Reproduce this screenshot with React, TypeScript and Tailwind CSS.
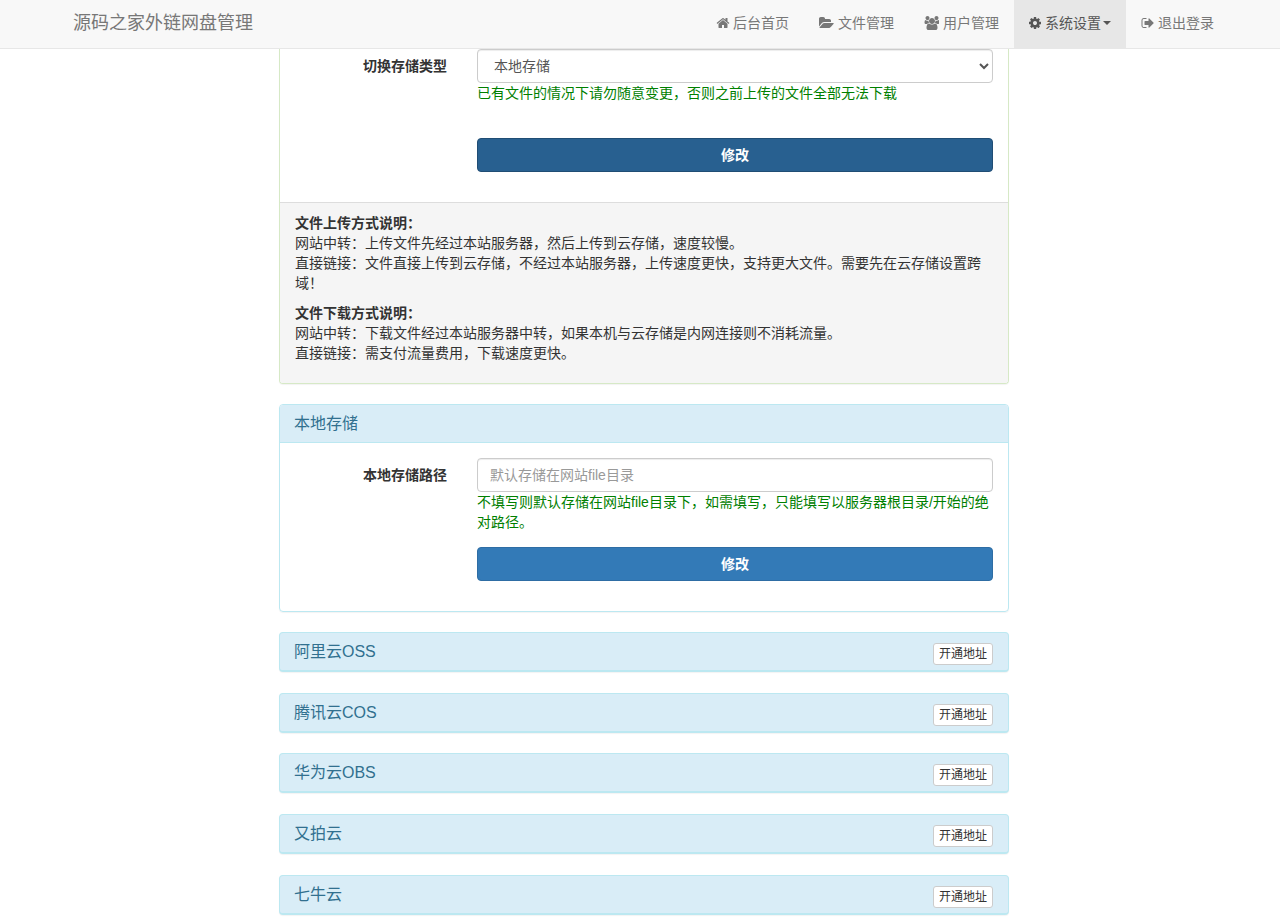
const HOME_PATH =
  "M1472 992v480q0 26-19 45t-45 19h-384v-384h-256v384h-384q-26 0-45-19t-19-45v-480q0-1 .5-3t.5-3l575-474 575 474q1 2 1 6zm223-69l-62 74q-8 9-21 11h-3q-13 0-21-7l-692-577-692 577q-12 8-24 7-13-2-21-11l-62-74q-8-10-7-23.500t11-21.500l719-599q32-26 76-26t76 26l244 204v-195q0-14 9-23t23-9h192q14 0 23 9t9 23v408l219 182q10 8 11 21.500t-7 23.500z";
const FOLDER_PATH =
  "M1879 952q0 31-31 66l-336 396q-43 51-120.500 86.500t-143.500 35.500h-1088q-34 0-60.500-13t-26.500-43q0-31 31-66l336-396q43-51 120.500-86.500t143.500-35.500h1088q34 0 60.500 13t26.500 43zm-343-344v160h-832q-94 0-197 47.500t-164 119.500l-337 396-5 6q0-4-.5-12.500t-.5-12.500v-960q0-92 66-158t158-66h320q92 0 158 66t66 158v32h544q92 0 158 66t66 158z";
const USERS_PATH =
  "M657 896q-162 5-265 128h-134q-82 0-138-40.500t-56-118.500q0-353 124-353 6 0 43.500 21t97.500 42.500 119 21.500q67 0 133-23-5 37-5 66 0 139 81 256zm1071 637q0 120-73 189.500t-194 69.500h-874q-121 0-194-69.500t-73-189.500q0-53 3.500-103.500t14-109 26.500-108.500 43-97.500 62-81 85.500-53.500 111.500-20q10 0 43 21.500t73 48 107 48 135 21.500 135-21.500 107-48 73-48 43-21.500q61 0 111.500 20t85.500 53.500 62 81 43 97.500 26.500 108.500 14 109 3.500 103.500zm-1024-1277q0 106-75 181t-181 75-181-75-75-181 75-181 181-75 181 75 75 181zm704 384q0 159-112.500 271.500t-271.500 112.500-271.500-112.500-112.500-271.500 112.500-271.500 271.500-112.500 271.500 112.500 112.500 271.500zm576 225q0 78-56 118.500t-138 40.500h-134q-103-123-265-128 81-117 81-256 0-29-5-66 66 23 133 23 59 0 119-21.500t97.500-42.500 43.500-21q124 0 124 353zm-128-609q0 106-75 181t-181 75-181-75-75-181 75-181 181-75 181 75 75 181z";
const COG_PATH =
  "M1152 896q0-106-75-181t-181-75-181 75-75 181 75 181 181 75 181-75 75-181zm512-109v222q0 12-8 23t-20 13l-185 28q-19 54-39 91 35 50 107 138 10 12 10 25t-9 23q-27 37-99 108t-94 71q-12 0-26-9l-138-108q-44 23-91 38-16 136-29 186-7 28-36 28h-222q-14 0-24.500-8.500t-11.500-21.500l-28-184q-49-16-90-37l-141 107q-10 9-25 9-14 0-25-11-126-114-165-168-7-10-7-23 0-12 8-23 15-21 51-66.500t54-70.500q-27-50-41-99l-183-27q-13-2-21-12.500t-8-23.500v-222q0-12 8-23t19-13l186-28q14-46 39-92-40-57-107-138-10-12-10-24 0-10 9-23 26-36 98.500-107.500t94.500-71.500q13 0 26 10l138 107q44-23 91-38 16-136 29-186 7-28 36-28h222q14 0 24.500 8.500t11.500 21.500l28 184q49 16 90 37l142-107q9-9 24-9 13 0 25 10 129 119 165 170 7 8 7 22 0 12-8 23-15 21-51 66.500t-54 70.500q26 50 41 98l183 28q13 2 21 12.500t8 23.500z";
const SIGN_OUT_PATH =
  "M704 1440q0 4 1 20t.5 26.500-3 23.500-10 19.500-20.500 6.500h-320q-119 0-203.500-84.500t-84.500-203.500v-704q0-119 84.500-203.500t203.500-84.500h320q13 0 22.500 9.500t9.500 22.500q0 4 1 20t.5 26.500-3 23.500-10 19.500-20.500 6.500h-320q-66 0-113 47t-47 113v704q0 66 47 113t113 47h312l11.500 1 11.500 3 8 5.500 7 9 2 13.500zm928-544q0 26-19 45l-544 544q-19 19-45 19t-45-19-19-45v-288h-448q-26 0-45-19t-19-45v-384q0-26 19-45t45-19h448v-288q0-26 19-45t45-19 45 19l544 544q19 19 19 45z";

function NavItem({
  path,
  wide,
  iconClass,
  label,
  active,
}: {
  path: string;
  wide?: boolean;
  iconClass: string;
  label: string;
  active?: boolean;
}) {
  return (
    <a className={`flex h-[48px] items-center gap-[4px] px-[15px] pb-[2px] ${active ? "bg-[#e7e7e7] text-[#555]" : "text-[#777]"}`}>
      <svg viewBox={wide ? "0 0 1920 1792" : "0 0 1792 1792"} className={`h-[14px] shrink-0 fill-current ${iconClass}`}>
        <path d={path} />
      </svg>
      <span>{label}</span>
      {active && <span className="-ml-[2px] h-0 w-0 border-x-[4px] border-t-[4px] border-x-transparent border-t-current" />}
    </a>
  );
}

function ProviderPanel({ title }: { title: string }) {
  return (
    <div className="mb-[20.75px] flex h-[40px] items-start justify-between rounded-[4px] border border-b-2 border-[#bce8f1] bg-[#d9edf7] pr-[15px] pl-[14px] pt-[10px] shadow-[0_1px_1px_rgba(0,0,0,0.05)]">
      <h3 className="text-[16px] leading-[17.6px] text-[#31708f]">{title}</h3>
      <a className="rounded-[3px] border border-[#ccc] bg-white px-[5px] text-[12px] leading-[20px] text-[#333]">开通地址</a>
    </div>
  );
}

function Row({ label, children }: { label: string; children: React.ReactNode }) {
  return (
    <div className="flex">
      <label className="w-[167px] shrink-0 pt-[7px] text-right font-bold leading-[20px]">{label}</label>
      <div className="ml-[30px] w-[516px] shrink-0">{children}</div>
    </div>
  );
}

export default function App() {
  return (
    <div className="h-[924px] overflow-hidden bg-white text-[14px] leading-[20px] text-[#333] [font-family:'Liberation_Sans','Noto_Sans_CJK_SC',sans-serif]">
      <nav className="flex h-[49px] items-start border-b border-[#e7e7e7] bg-[#f8f8f8] pl-[73px] pr-[51px]">
        <a className="text-[18px] leading-[46px] text-[#777]">源码之家外链网盘管理</a>
        <div className="ml-auto flex">
          <NavItem path={HOME_PATH} iconClass="-mx-[0.5px] w-[14px]" label="后台首页" />
          <NavItem path={FOLDER_PATH} wide iconClass="w-[15px]" label="文件管理" />
          <NavItem path={USERS_PATH} wide iconClass="w-[15px]" label="用户管理" />
          <NavItem active path={COG_PATH} iconClass="-mx-[1px] w-[14px]" label="系统设置" />
          <NavItem path={SIGN_OUT_PATH} iconClass="-mx-[0.5px] w-[14px]" label="退出登录" />
        </div>
      </nav>

      <main className="ml-[279px] w-[730px]">
        <div className="mb-[20px] rounded-b-[4px] border-x border-b border-[#d6e9c6] shadow-[0_1px_1px_rgba(0,0,0,0.05)]">
          <div className="h-[153px]">
            <Row label="切换存储类型">
              <select className="h-[34px] w-full rounded-[4px] border border-[#ccc] bg-white px-[12px] text-[#555] shadow-[inset_0_1px_1px_rgba(0,0,0,0.075)]">
                <option>本地存储</option>
              </select>
              <p className="text-[#008000]">已有文件的情况下请勿随意变更，否则之前上传的文件全部无法下载</p>
              <button className="mt-[35px] h-[34px] w-full rounded-[4px] border border-[#204d74] bg-[#286090] font-bold text-white">修改</button>
            </Row>
          </div>
          <div className="rounded-b-[3px] border-t border-[#ddd] bg-[#f5f5f5] px-[15px] pt-[10px] pb-[10px]">
            <p className="mb-[10px]">
              <b>文件上传方式说明：</b>
              <br />
              网站中转：上传文件先经过本站服务器，然后上传到云存储，速度较慢。
              <br />
              直接链接：文件直接上传到云存储，不经过本站服务器，上传速度更快，支持更大文件。需要先在云存储设置跨域！
            </p>
            <p className="mb-[10px]">
              <b>文件下载方式说明：</b>
              <br />
              网站中转：下载文件经过本站服务器中转，如果本机与云存储是内网连接则不消耗流量。
              <br />
              直接链接：需支付流量费用，下载速度更快。
            </p>
          </div>
        </div>

        <div className="mb-[20px] rounded-[4px] border border-[#bce8f1] shadow-[0_1px_1px_rgba(0,0,0,0.05)]">
          <h3 className="h-[38px] rounded-t-[3px] border-b border-[#bce8f1] bg-[#d9edf7] pr-[15px] pl-[14px] pt-[10px] text-[16px] leading-[17.6px] text-[#31708f]">本地存储</h3>
          <div className="h-[167.9px] pt-[15px]">
            <Row label="本地存储路径">
              <input
                className="block h-[34px] w-full rounded-[4px] border border-[#ccc] px-[12px] text-[#555] shadow-[inset_0_1px_1px_rgba(0,0,0,0.075)] placeholder:text-[#999]"
                placeholder="默认存储在网站file目录"
              />
              <p className="text-[#008000]">不填写则默认存储在网站file目录下，如需填写，只能填写以服务器根目录/开始的绝对路径。</p>
              <button className="mt-[15px] h-[34px] w-full rounded-[4px] border border-[#2e6da4] bg-[#337ab7] font-bold text-white">修改</button>
            </Row>
          </div>
        </div>

        <ProviderPanel title="阿里云OSS" />
        <ProviderPanel title="腾讯云COS" />
        <ProviderPanel title="华为云OBS" />
        <ProviderPanel title="又拍云" />
        <ProviderPanel title="七牛云" />
      </main>
    </div>
  );
}
